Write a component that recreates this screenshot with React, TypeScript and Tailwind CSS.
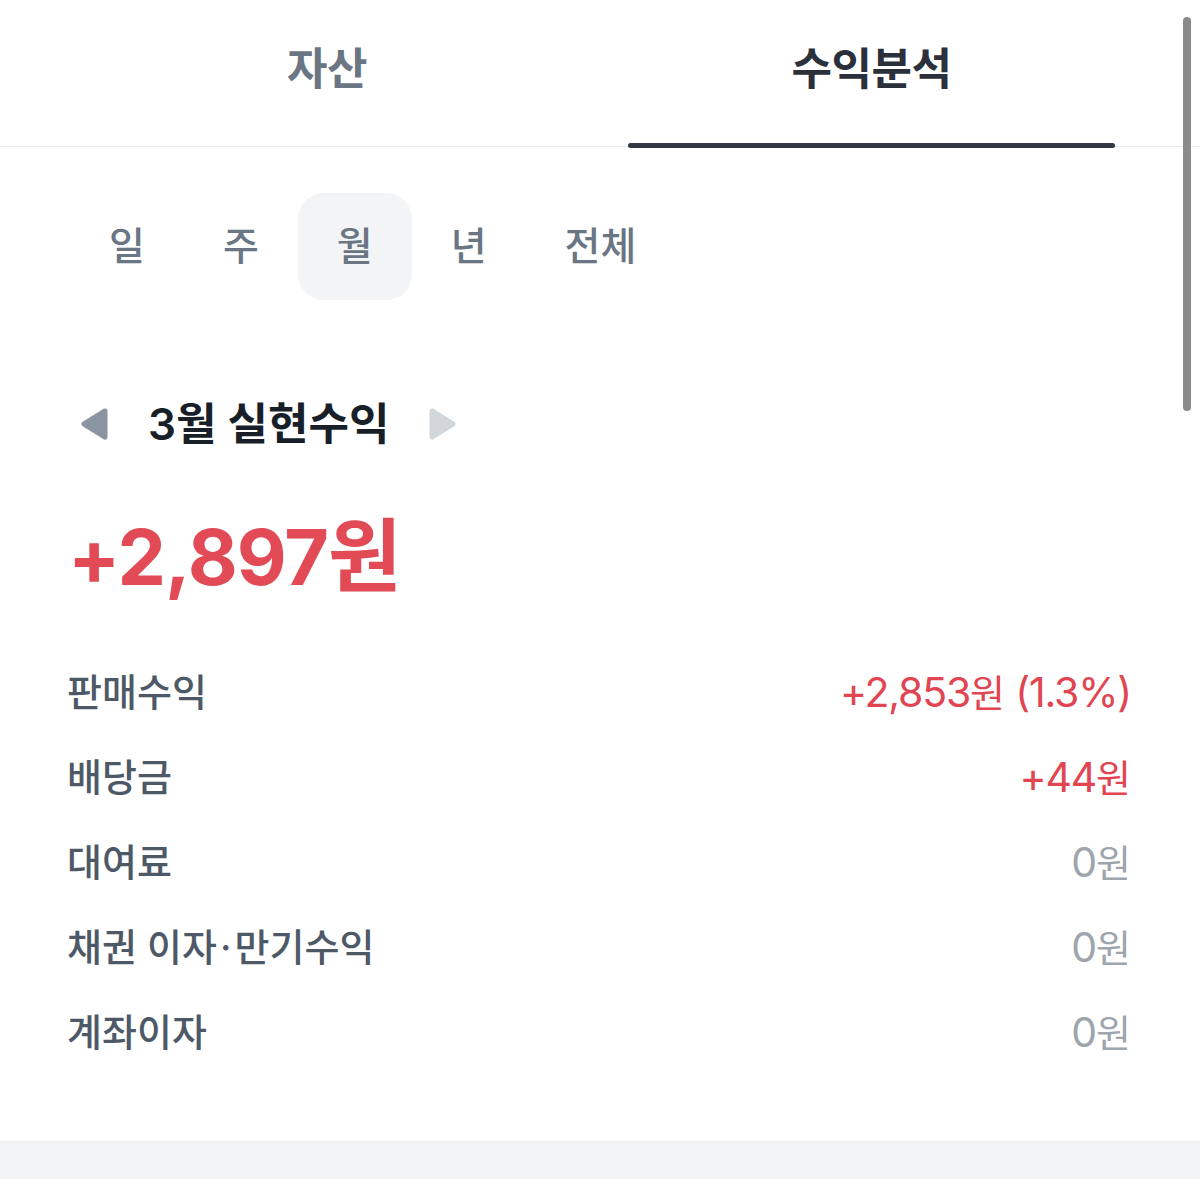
import { useState } from "react";

const font = { fontFamily: '"Inter", "Noto Sans CJK KR", sans-serif' };

const periods = ["일", "주", "월", "년", "전체"];

const rows = [
  { label: "판매수익", value: "+2,853원 (1.3%)", red: true },
  { label: "배당금", value: "+44원", red: true },
  { label: "대여료", value: "0원", red: false },
  { label: "채권 이자·만기수익", value: "0원", red: false },
  { label: "계좌이자", value: "0원", red: false },
];

const Mixed = ({ text, hangul }: { text: string; hangul: string }) => {
  const parts = text.split(/([\uac00-\ud7a3]+)/);
  return (
    <>
      {parts.map((p, i) =>
        /[\uac00-\ud7a3]/.test(p) ? (
          <span key={i} className={hangul}>
            {p}
          </span>
        ) : (
          <span key={i}>{p}</span>
        )
      )}
    </>
  );
};

// the middle dot gets a bit of room on both sides
const Label = ({ text }: { text: string }) => {
  const parts = text.split("·");
  return (
    <>
      {parts.map((p, i) => (
        <span key={i}>
          {i > 0 && <span className="mx-[3px]">·</span>}
          {p}
        </span>
      ))}
    </>
  );
};

const Triangle = ({ dir, color }: { dir: "left" | "right"; color: string }) => (
  <svg width="32" height="36" viewBox="0 0 32 36">
    {dir === "left" ? (
      <path d="M27 5 L6 18 L27 31 Z" fill={color} stroke={color} strokeWidth="5" strokeLinejoin="round" />
    ) : (
      <path d="M5 5 L26 18 L5 31 Z" fill={color} stroke={color} strokeWidth="5" strokeLinejoin="round" />
    )}
  </svg>
);

export default function App() {
  const [period, setPeriod] = useState("월");

  return (
    <div className="relative h-[1179px] bg-white flex flex-col overflow-hidden" style={font}>
      {/* top tabs */}
      <div className="flex h-[147px] border-b border-[#e8eaed] shrink-0">
        <div className="ml-[40px] w-[574px] flex items-center justify-center pb-[8px]">
          <span className="text-[44px] font-semibold text-[#6b7684] tracking-[-0.5px]">자산</span>
        </div>
        <div className="relative ml-[14px] w-[487px] flex items-center justify-center pb-[8px]">
          <span className="text-[44px] font-bold text-[#2b303b] tracking-[-0.5px]">수익분석</span>
          <div className="absolute left-0 right-0 bottom-[-2px] h-[5px] rounded-full bg-[#333844]" />
        </div>
      </div>

      {/* period selector */}
      <div className="flex pl-[70px] mt-[46px]">
        {periods.map((p) => (
          <button
            key={p}
            onClick={() => setPeriod(p)}
            className={
              "h-[107px] px-[39px] rounded-[26px] text-[39px] font-medium text-[#6b7684] " +
              (period === p ? "bg-[#f2f4f6]" : "")
            }
          >
            {p}
          </button>
        ))}
      </div>

      {/* month title */}
      <div className="flex items-center h-[48px] mt-[100px] pl-[78px]">
        <Triangle dir="left" color="#8b95a1" />
        <span className="ml-[38px] text-[44px] font-semibold text-[#191f28]">3월 실현수익</span>
        <span className="ml-[38px]">
          <Triangle dir="right" color="#d1d6db" />
        </span>
      </div>

      {/* total */}
      <div className="mt-[60px] pl-[68px] h-[96px] flex items-center">
        <span className="text-[77px] font-bold text-[#e24b55] tracking-[-1px] leading-none">
          <Mixed text="+2,897원" hangul="text-[80px] tracking-normal" />
        </span>
      </div>

      {/* breakdown */}
      <div className="mt-[46px] pl-[67px] pr-[69px] flex flex-col">
        {rows.map((r) => (
          <div key={r.label} className="h-[85px] flex items-center justify-between">
            <span className="text-[38px] font-medium text-[#4e5968]">
              <Label text={r.label} />
            </span>
            <span
              className={
                "text-[41px] tracking-[-1.2px] " + (r.red ? "text-[#e24552]" : "text-[#9ea5ad]")
              }
            >
              <Mixed text={r.value} hangul="text-[38px] tracking-normal" />
            </span>
          </div>
        ))}
      </div>

      <div className="flex-1" />
      <div className="h-[38px] bg-[#f2f3f5] shrink-0" />

      {/* scrollbar overlay */}
      <div className="absolute top-[17px] right-[9px] w-[8px] h-[394px] rounded-full bg-[#8a8a8a]" />
    </div>
  );
}
